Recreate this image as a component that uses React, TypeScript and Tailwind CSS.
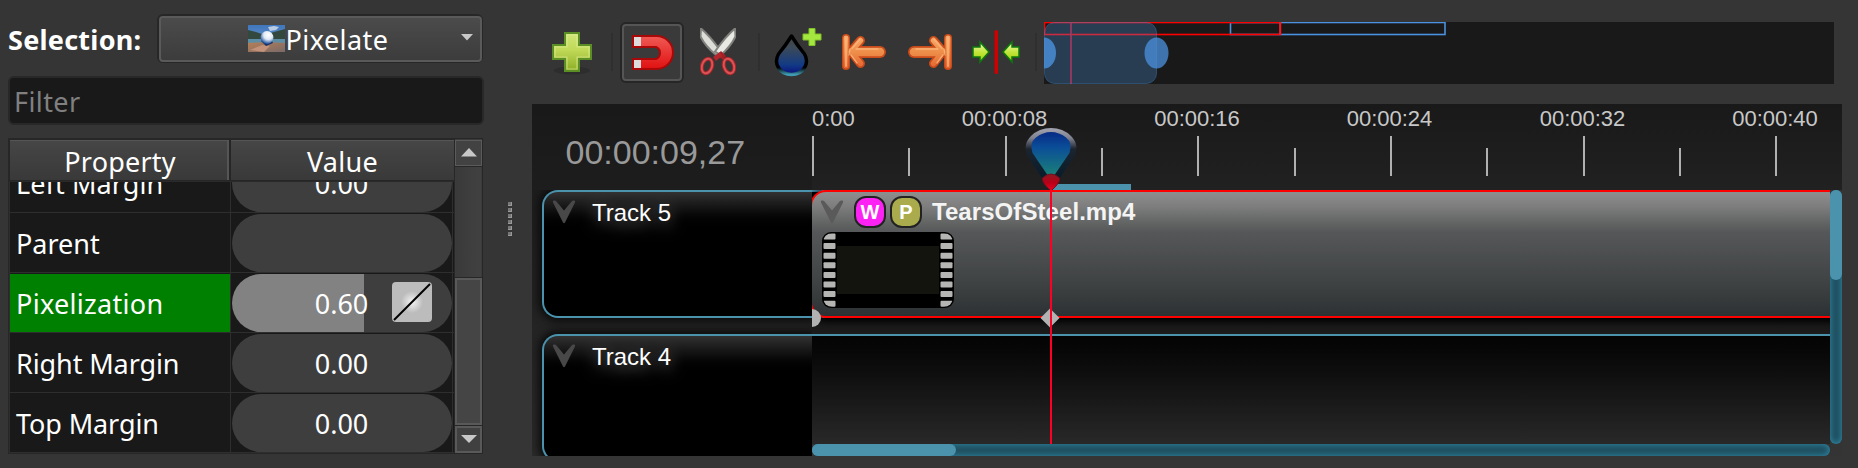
import React from "react";

const UI = "font-['Noto_Sans',sans-serif] text-[27px] text-white whitespace-nowrap";
const TL = "font-['Liberation_Sans',sans-serif] whitespace-nowrap";

function Thumb() {
  return (
    <svg width="37" height="27" viewBox="0 0 37 27" className="block">
      <defs>
        <linearGradient id="sky" x1="0" y1="0" x2="0" y2="1">
          <stop offset="0" stopColor="#3f76bd" />
          <stop offset="1" stopColor="#7fa3cf" />
        </linearGradient>
        <linearGradient id="sand" x1="0" y1="0" x2="1" y2="1">
          <stop offset="0" stopColor="#b77f55" />
          <stop offset="1" stopColor="#7b6a68" />
        </linearGradient>
        <radialGradient id="ball" cx=".6" cy=".3" r=".7">
          <stop offset="0" stopColor="#fff" />
          <stop offset=".5" stopColor="#dfe9f5" />
          <stop offset="1" stopColor="#1f4f9c" />
        </radialGradient>
      </defs>
      <rect width="37" height="27" fill="url(#sky)" />
      <path d="M20 2l6-1 5 1-3 3-6 1z" fill="#b9cbe2" />
      <path d="M0 5l8 2 9 3 9-3 11-3v11H0z" fill="#33493f" />
      <rect y="14" width="37" height="4" fill="#5e8ea6" />
      <path d="M0 18l18-1 19 1v9H0z" fill="url(#sand)" />
      <path d="M2 25l12-5 8 1-6 6z" fill="#c4917a" />
      <path d="M13 16l5 5 7-3-2-4z" fill="#16336e" />
      <circle cx="19" cy="12.500" r="6.500" fill="url(#ball)" />
    </svg>
  );
}

function Pill({ value }: { value?: string }) {
  return (
    <div className={`${UI} mt-px ml-px flex h-[58px] w-[220px] items-center justify-center rounded-[29px] bg-[#3e3e3e] pt-[2px] leading-[58px]`}>
      <span className="-ml-[1px]">{value}</span>
    </div>
  );
}

function Row({ name, ls, children }: { name: string; ls: string; children: React.ReactNode }) {
  return (
    <div className="flex h-[60px] shrink-0 border-b border-[#2e2e2e]">
      <div className={`${UI} w-[220px] pt-px pl-[6px] leading-[60px]`}>
        <span className={ls}>{name}</span>
      </div>
      <div className="h-[59px] w-[223px] border-x border-[#2e2e2e]">{children}</div>
    </div>
  );
}

function Properties() {
  return (
    <div className="flex w-[484px] shrink-0 flex-col pl-[8px]">
      <div className="mt-[14px] flex h-[49px] items-center">
        <span className={`${UI} w-[149px] pt-[3px] font-bold tracking-[0.25px]`}>Selection:</span>
        <div className="h-[49px] w-[326px] rounded-[6px] bg-[#272727] p-[1.500px]">
          <div className="flex h-[46px] items-center rounded-[4px] border-2 border-[#5a5a5a] bg-linear-to-b from-[#4b4b4b] to-[#3c3c3c] pr-[7px] pl-[87px]">
            <Thumb />
            <span className={`${UI} flex-1 pt-[3px] pl-px tracking-[0.45px]`}>Pixelate</span>
            <svg width="12" height="7" className="-mt-[3px]"><path d="M0 0h12l-6 6.500z" fill="#c8c8c8" /></svg>
          </div>
        </div>
      </div>
      <div className="mt-[13px] h-[49px] w-[476px] rounded-[6px] border-2 border-[#282828] bg-[#191919] pl-[4px]">
        <span className={`${UI} leading-[47px] tracking-[0.4px] text-[#808080]!`}>Filter</span>
      </div>
      <div className="mt-[13px] flex h-[316px] w-[475px] border border-[#272727] bg-[#191919]">
        <div className="flex w-[445px] flex-col">
          <div className="flex h-[43px] shrink-0 border-y border-t-[#272727] border-b-[#2a2a2a] bg-[#262626]">
            <div className={`${UI} ml-px h-[40px] w-[219px] border-t border-r-2 border-[#555] bg-linear-to-b from-[#464646] to-[#393939] pl-[3px] text-center leading-[41px] tracking-[0.2px]`}>Property</div>
            <div className={`${UI} ml-[2px] h-[40px] w-[223px] border-t border-[#555] bg-linear-to-b from-[#464646] to-[#393939] text-center leading-[41px] tracking-[0.3px]`}>Value</div>
          </div>
          <div className="flex h-[271px] flex-col justify-end overflow-hidden border-l border-[#2e2e2e]">
            <Row name="Left Margin" ls="tracking-[0.1px]"><Pill value="0.00" /></Row>
            <Row name="Parent" ls=""><Pill /></Row>
            <div className="flex h-[60px] shrink-0 border-b border-[#2e2e2e]">
              <div className={`${UI} mt-px h-[58px] w-[220px] bg-[#008000] pl-[6px] leading-[59px] tracking-[0.3px]`}>Pixelization</div>
              <div className="h-[59px] w-[223px] border-x border-[#2e2e2e]">
                <div className={`${UI} relative mt-px ml-px flex h-[58px] w-[220px] items-center justify-center rounded-[29px] bg-[linear-gradient(90deg,#828282_132px,#3e3e3e_132px)] pt-[2px] leading-[58px]`}>
                  <span className="-ml-[1px]">0.60</span>
                  <svg width="40" height="40" className="absolute top-[8px] right-[20px]">
                    <defs>
                      <radialGradient id="kf">
                        <stop offset="0" stopColor="#f4f4f4" />
                        <stop offset=".55" stopColor="#bcbcbc" />
                      </radialGradient>
                    </defs>
                    <rect width="40" height="40" rx="4" fill="url(#kf)" />
                    <path d="M2 38L38 2" stroke="#000" strokeWidth="2" />
                  </svg>
                </div>
              </div>
            </div>
            <Row name="Right Margin" ls="tracking-[-0.1px]"><Pill value="0.00" /></Row>
            <Row name="Top Margin" ls="tracking-[-0.1px]"><Pill value="0.00" /></Row>
          </div>
        </div>
        <div className="flex w-[28px] flex-col border-l border-[#272727] bg-[#3b3b3b] pt-px">
          <div className="flex h-[26px] items-center justify-center border border-[#5b5b5b] bg-[#424242]">
            <svg width="16" height="9" className="-mt-[1px]"><path d="M0 8.500h16L8 0z" fill="#c8c8c8" /></svg>
          </div>
          <div className="h-px bg-[#272727]" />
          <div className="mx-px flex-1 bg-linear-to-r from-[#3a3a3a] to-[#414141]" />
          <div className="h-px bg-[#272727]" />
          <div className="h-[147px] border-2 border-[#595959] bg-[#454545]" />
          <div className="h-px bg-[#272727]" />
          <div className="flex h-[27px] items-center justify-center border-2 border-[#595959] bg-[#404040]">
            <svg width="16" height="9"><path d="M0 0h16L8 8z" fill="#c8c8c8" /></svg>
          </div>
        </div>
      </div>
    </div>
  );
}

function ToolSep({ className }: { className: string }) {
  return <div className={`h-[38px] w-[2px] shrink-0 bg-[#2f2f2f] ${className}`} />;
}

function LimitArrow({ flip }: { flip?: boolean }) {
  return (
    <svg width="44" height="36" viewBox="0 0 44 36" className={flip ? "shrink-0 -scale-x-100" : "shrink-0"}>
      <g fill="none" strokeLinecap="round" strokeLinejoin="round">
        <g stroke="#c94a1a">
          <path d="M38 18H12" strokeWidth="12" />
          <path d="M18.500 6.500L9 17.500l9.500 12" strokeWidth="9" />
          <path d="M4 4v28" strokeWidth="8" />
        </g>
        <g stroke="url(#org)">
          <path d="M38 18H12" strokeWidth="8.500" />
          <path d="M18.500 6.500L9 17.500l9.500 12" strokeWidth="5.500" />
          <path d="M4 4v28" strokeWidth="5" />
        </g>
        <path d="M8 15l-1 6M15 29L9 21M36 15H14M18 5.500l-8 9" stroke="#fcb680" strokeWidth="1.300" opacity=".8" />
        <path d="M4 4v28" stroke="#fcb680" strokeWidth="2" opacity=".7" />
      </g>
    </svg>
  );
}

function Toolbar() {
  return (
    <div className="flex h-[104px] items-start pl-[20px]">
      <svg width="40" height="44" viewBox="0 0 40 44" className="mt-[32px] shrink-0">
        <defs>
          <linearGradient id="pls" x1="0" y1="0" x2="0" y2="1">
            <stop offset="0" stopColor="#cfe67a" />
            <stop offset=".45" stopColor="#c0d957" />
            <stop offset="1" stopColor="#8cad25" />
          </linearGradient>
          <linearGradient id="org" gradientUnits="userSpaceOnUse" x1="0" y1="0" x2="0" y2="36">
            <stop offset="0" stopColor="#f8ad6c" />
            <stop offset=".5" stopColor="#ee8f4a" />
            <stop offset="1" stopColor="#e55f2c" />
          </linearGradient>
          <linearGradient id="grn" x1="0" y1="0" x2="0" y2="1">
            <stop offset="0" stopColor="#f0fab8" />
            <stop offset=".5" stopColor="#c3e63c" />
            <stop offset="1" stopColor="#9bcf08" />
          </linearGradient>
        </defs>
        <ellipse cx="20" cy="38.500" rx="18" ry="4" fill="#2d2d2d" />
        <path d="M13 1h14v12h12v14H27v12H13V27H1V13h12z" fill="url(#pls)" stroke="#5b8f25" strokeWidth="2" />
        <path d="M15 3h10v12h12v10H25v12H15V25H3V15h12z" fill="none" stroke="#e0ef9a" strokeWidth="1.200" opacity=".6" />
      </svg>
      <ToolSep className="mt-[33px] ml-[19px]" />
      <div className="mt-[22px] ml-[7px] h-[61px] w-[64px] shrink-0 rounded-[6px] bg-[#262626] p-[2px]">
        <div className="flex h-[57px] w-[60px] items-center justify-center rounded-[4px] border-2 border-[#555] bg-[#3a3a3a]">
          <svg width="42" height="35" viewBox="0 0 42 35" className="mt-[-1px] ml-[1px]">
            <defs>
              <linearGradient id="mag" x1="0" y1="0" x2="0" y2="1">
                <stop offset="0" stopColor="#f15a55" />
                <stop offset="1" stopColor="#e01111" />
              </linearGradient>
            </defs>
            <path d="M1 1h23.500a16.500 16.500 0 0 1 0 33H1V24h23a6.500 6.500 0 0 0 0-12H1z" fill="url(#mag)" stroke="#a90808" strokeWidth="2" />
            <path d="M2 2h7v9H2zM2 25h7v8H2z" fill="#dcdcdc" />
          </svg>
        </div>
      </div>
      <svg width="36" height="48" viewBox="0 0 36 48" className="mt-[28px] ml-[16px] shrink-0">
        <path d="M1 0.500L0.500 8.500Q5 18 16 27L21 23.500Q10 8 1 .5z" fill="#deded8" stroke="#80827d" strokeWidth="2" />
        <path d="M35 0.500L35.500 8.500Q31 18 21 27L15 23.500Q26 8 35 .5z" fill="#e9e9e4" stroke="#80827d" strokeWidth="2" />
        <path d="M17 27l4-4 5 5-3 4z" fill="#a51f24" />
        <path d="M20 24l-7 5 3 4 6-5z" fill="#b3262b" />
        <ellipse cx="7" cy="38" rx="5" ry="7.500" transform="rotate(18 7 38)" fill="none" stroke="#a3262a" strokeWidth="4" />
        <ellipse cx="7" cy="38" rx="5" ry="7.500" transform="rotate(18 7 38)" fill="none" stroke="#dc5355" strokeWidth="2" />
        <ellipse cx="29" cy="38" rx="5" ry="7.500" transform="rotate(-18 29 38)" fill="none" stroke="#a3262a" strokeWidth="4" />
        <ellipse cx="29" cy="38" rx="5" ry="7.500" transform="rotate(-18 29 38)" fill="none" stroke="#dc5355" strokeWidth="2" />
      </svg>
      <ToolSep className="mt-[33px] ml-[22px]" />
      <svg width="48" height="50" viewBox="0 0 48 50" className="mt-[28px] ml-[14px] shrink-0">
        <defs>
          <linearGradient id="drop" x1="0" y1="0" x2="0" y2="1">
            <stop offset="0" stopColor="#424242" />
            <stop offset=".3" stopColor="#3c4a58" />
            <stop offset=".75" stopColor="#123a85" />
            <stop offset="1" stopColor="#0a0f80" />
          </linearGradient>
          <linearGradient id="dropEdge" x1="0" y1="0" x2="0" y2="1">
            <stop offset=".82" stopColor="#000" />
            <stop offset="1" stopColor="#3d9bb4" />
          </linearGradient>
        </defs>
        <path d="M17.500 8Q12 17 4.500 26C-1 36 6 46.500 17.500 46.500S36 36 30.500 26Q23 17 17.500 8z" fill="url(#drop)" stroke="url(#dropEdge)" strokeWidth="3.500" strokeLinejoin="round" />
        <path d="M35 0.500h6v5.500h6v6h-6v5.500h-6V12h-6V6h6z" fill="#a4e83f" stroke="#7fc02a" strokeWidth="1" />
      </svg>
      <div className="mt-[34px] ml-[20px] flex shrink-0 gap-[22px]">
        <LimitArrow />
        <LimitArrow flip />
      </div>
      <svg width="48" height="45" viewBox="0 0 48 45" className="mt-[30px] ml-[20px] shrink-0">
        <path d="M1 17h7v-5l9 10-9 10v-5H1z" fill="url(#grn)" stroke="#0b7a0b" strokeWidth="1.500" />
        <path d="M47 17h-7v-5l-9 10 9 10v-5h7z" fill="url(#grn)" stroke="#0b7a0b" strokeWidth="1.500" />
        <rect x="22.500" y="0" width="3.500" height="44" rx="1.500" fill="#cf0000" />
      </svg>
      <ToolSep className="mt-[33px] ml-[15px]" />
      <svg width="790" height="62" viewBox="0 0 790 62" className="mt-[22px] ml-[7px] shrink-0 bg-[#191919]">
        <rect x="186.500" y="0.500" width="214.500" height="12" fill="none" stroke="#4b92e0" strokeWidth="1.600" />
        <rect x=".5" y=".5" width="236" height="12" fill="none" stroke="#f00" strokeWidth="1.600" />
        <path d="M236 0v13" stroke="#e8202c" strokeWidth="1.800" />
        <rect x="26" y="0" width="2" height="62" fill="#d01030" fillOpacity=".8" />
        <rect x=".5" y=".5" width="112" height="61" rx="10" fill="#4b92d8" fillOpacity=".3" stroke="#4b92d8" strokeOpacity=".35" />
        <ellipse cx="0" cy="31" rx="12" ry="15.500" fill="#4b92e0" fillOpacity=".8" />
        <ellipse cx="112.500" cy="31" rx="12" ry="15.500" fill="#4b92e0" fillOpacity=".75" />
      </svg>
    </div>
  );
}

const TICKS = [0, 96, 193, 289, 385, 482, 578, 674, 771, 867, 963];
const LABELS = [
  { x: 192.5, t: "00:00:08" },
  { x: 385, t: "00:00:16" },
  { x: 577.5, t: "00:00:24" },
  { x: 770.5, t: "00:00:32" },
  { x: 963, t: "00:00:40" },
];

function Chevron({ className }: { className: string }) {
  return (
    <svg width="24" height="24" viewBox="0 0 24 24" className={className}>
      <path d="M1.500.5Q3.500 0 4.500 1.500L12 10.500 19.500 1.500Q20.500 0 22.500.5 23.500 1 23 2.500L13 22.500Q12 24 11 22.500L1 2.500Q.5 1 1.500.5z" fill="currentColor" />
    </svg>
  );
}

function TrackHead({ name }: { name: string }) {
  return (
    <div className="flex h-[128px] w-[270px] shrink-0 rounded-l-[16px] border-y-2 border-l-2 border-[#4b92ad] bg-black bg-linear-to-b from-[#323232] from-0% to-black to-[40px] pt-[8px] pl-[8px] shadow-[0_0_9px_3px_#0a0a0a]">
      <Chevron className="text-[#484848]" />
      <span className={`${TL} ml-[16px] h-[28px] text-[24px] leading-[25px] text-white [text-shadow:0_4px_16px_#888]`}>{name}</span>
    </div>
  );
}

function Film() {
  return (
    <svg width="132" height="76" viewBox="0 0 132 76" className="ml-[10px] block">
      <rect width="132" height="76" rx="9" fill="#000" />
      <rect x="15" y="14" width="102" height="48" fill="#13140e" />
      <clipPath id="film"><rect x="1" y="1" width="130" height="74" rx="9" /></clipPath>
      <g clipPath="url(#film)" fill="#b5b5b3">
        {[0, 1, 2, 3, 4, 5, 6, 7].map((i) => (
          <React.Fragment key={i}>
            <rect x="1.500" y={1.5 + i * 9.6} width="12" height="6" rx="1" />
            <rect x="118.500" y={1.5 + i * 9.6} width="12" height="6" rx="1" />
          </React.Fragment>
        ))}
      </g>
    </svg>
  );
}

function Badge({ letter, className }: { letter: string; className: string }) {
  return (
    <div className={`${TL} flex h-[32px] w-[32px] items-center justify-center rounded-[12px] border-2 border-[#222] text-[20px] leading-[28px] font-bold text-white ${className}`}>{letter}</div>
  );
}

function Timeline() {
  return (
    <div className="relative flex h-[352px] w-[1310px] overflow-hidden bg-[#343434]">
      <div className="flex w-[280px] shrink-0 flex-col bg-linear-to-b from-[#191919] to-[#2a2a2a]">
        <div className={`${TL} h-[86px] pl-[33.500px] text-[34px] leading-[97px] text-[#999]`}>00:00:09,27</div>
        <div className="flex h-[266px] flex-col gap-[16px] overflow-hidden pl-[10px]">
          <TrackHead name="Track 5" />
          <TrackHead name="Track 4" />
        </div>
      </div>
      <div className="flex w-[1030px] flex-col">
        <div className="relative h-[86px] bg-linear-to-b from-[#191919] to-[#212121]">
          <span className={`${TL} absolute top-px left-0 text-[22px] leading-[28px] text-[#c8c8c8]`}>0:00</span>
          {LABELS.map((l) => (
            <span key={l.t} className={`${TL} absolute top-px -translate-x-1/2 text-[22px] leading-[28px] text-[#c8c8c8]`} style={{ left: l.x }}>{l.t}</span>
          ))}
          <svg width="1030" height="86" className="absolute top-0 left-0">
            {TICKS.map((x, i) => (
              <rect key={x} x={x} y={i % 2 ? 44 : 32} width="2" height={i % 2 ? 28 : 40} fill="#b0b0b0" />
            ))}
            <rect x="239" y="80" width="80" height="6" fill="#4b92ad" />
          </svg>
        </div>
        <div className="flex h-[254px]">
          <div className="flex w-[1018px] flex-col overflow-hidden bg-linear-to-b from-[#191919] to-[#1c1c1c]">
            <div className="h-[128px] shrink-0 border-y-2 border-[#4b92ad] bg-black">
              <div className="-mt-[2px] -ml-[2px] h-[128px] w-[1050px] rounded-[16px] border-2 border-[#f00] bg-[linear-gradient(#8e8e8e,#7d7e7d_14px,#555758_40px,#404343_90px,#2c3134)] shadow-[0_2px_7px_2px_#000]">
                <div className="flex h-[40px] pt-[4px] pl-[8px]">
                  <Chevron className="mt-[4px] text-[#5a5a5a]" />
                  <Badge letter="W" className="ml-[10px] bg-[#fb22f3]" />
                  <Badge letter="P" className="ml-[4px] bg-[#a9ab4c]" />
                  <span className={`${TL} ml-[10px] text-[24px] leading-[31px] font-bold tracking-[0.07px] text-[#f4f4f4]`}>TearsOfSteel.mp4</span>
                </div>
                <Film />
              </div>
            </div>
            <div className="mt-[16px] h-[128px] shrink-0 border-y-2 border-[#4b92ad] bg-linear-to-b from-[#040404] to-[#2f2f2f]" />
          </div>
          <div className="h-[254px] w-[12px] rounded-[6px] bg-[#1f4f5f] shadow-[inset_0_0_6px_#3290b0]">
            <div className="h-[90px] rounded-[6px] bg-[#4b92ad]" />
          </div>
        </div>
        <div className="h-[12px] w-[1018px] rounded-[6px] bg-[#1f4f5f] shadow-[inset_0_0_6px_#3290b0]">
          <div className="h-[12px] w-[144px] rounded-[6px] bg-[#4b92ad]" />
        </div>
      </div>
      <svg width="1030" height="352" className="absolute top-0 left-[280px]">
        <defs>
          <linearGradient id="head" x1="0" y1="0" x2="0" y2="1">
            <stop offset="0" stopColor="#062a85" />
            <stop offset=".35" stopColor="#0b4d98" />
            <stop offset="1" stopColor="#1a8078" />
          </linearGradient>
          <linearGradient id="rim" x1="0" y1="0" x2="0" y2="1">
            <stop offset="0" stopColor="#a4a4b2" />
            <stop offset=".2" stopColor="#80828f" />
            <stop offset=".42" stopColor="#1c2430" />
            <stop offset="1" stopColor="#081c2a" />
          </linearGradient>
          <linearGradient id="tip" x1="0" y1="0" x2="0" y2="1">
            <stop offset="0" stopColor="#8a1c22" />
            <stop offset=".5" stopColor="#b80018" />
            <stop offset="1" stopColor="#f00020" />
          </linearGradient>
        </defs>
        <path d="M0 205A9 9 0 0 1 0 223z" fill="#b2b2b2" />
        <path d="M238 204.500l9.500 9.500-9.500 9.500-9.500-9.500z" fill="#b2b2b2" />
        <path d="M230 74L216 53Q210 41 219 32Q227 24 239 24Q251 24 259 32Q268 41 262 53L248 74Q239 66 230 74z" fill="url(#rim)" />
        <path d="M235.500 71L220.500 49Q217 39 224 33.500Q231 28 239 28Q247 28 254 33.500Q261 39 257.500 49L242.500 71z" fill="url(#head)" />
        <path d="M230.500 74Q239 66 247.500 74Q249 78 239 87Q229 78 230.500 74z" fill="url(#tip)" stroke="#701020" />
        <rect x="238" y="86" width="2" height="254" fill="#ff0024" />
      </svg>
    </div>
  );
}

export default function App() {
  return (
    <div className="flex h-[468px] w-[1858px] overflow-hidden bg-[#353535]">
      <Properties />
      <div className="flex w-[48px] shrink-0 flex-col gap-[2px] pt-[202px] pl-[24px]">
        {[0, 1, 2, 3, 4, 5].map((i) => (
          <div key={i} className="h-[4px] w-[4px] border-r border-b border-[#9a9a9a] bg-[#777]" />
        ))}
      </div>
      <div className="flex w-[1326px] flex-col">
        <Toolbar />
        <Timeline />
      </div>
    </div>
  );
}
